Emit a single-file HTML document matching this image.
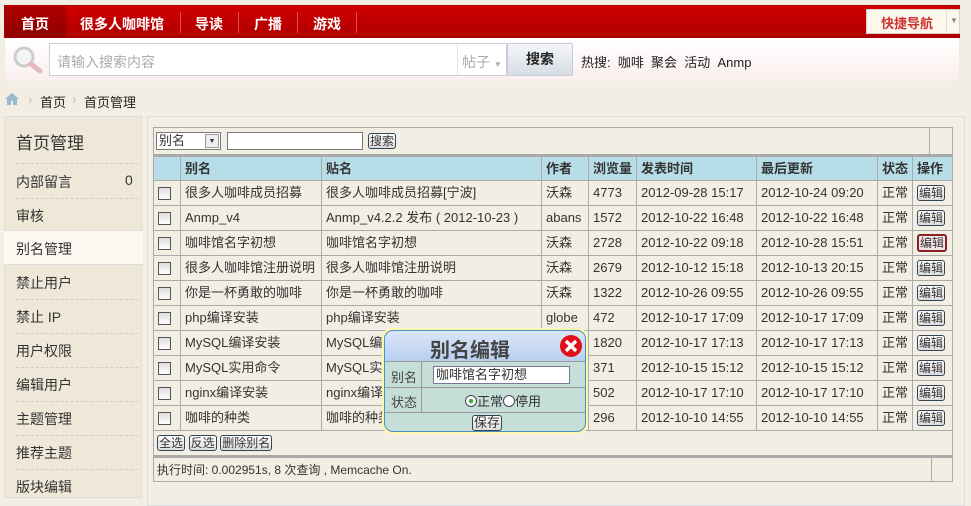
<!DOCTYPE html>
<html><head><meta charset="utf-8"><style>
*{margin:0;padding:0;box-sizing:border-box}
body{width:971px;height:498px;overflow:hidden;background:#f3eee3;font-family:"Liberation Sans","Noto Sans CJK SC",sans-serif;font-size:13px;color:#333;position:relative}
.a{position:absolute}
#nav{left:4px;top:5px;width:956px;height:33px;background:linear-gradient(#d00000,#b00000);border:1px solid #a00}
#nav span{position:absolute;top:8px;color:#fff;font-weight:bold;font-size:14px}
.sep{position:absolute;top:6px;width:1px;height:21px;background:#e05050}
#sb{left:4px;top:38px;width:956px;height:44px;background:linear-gradient(#fff,#fbeeee);border:1px solid #eed;border-top:none}
table{border-collapse:collapse}
#t td{border:1px solid #aaa;height:25px;padding:0 4px;font-size:13px;color:#333;white-space:nowrap;line-height:14px}
#t tr.h td{background:#b7dde8;font-weight:bold}
.cb{display:inline-block;width:13px;height:13px;border:1px solid #555;background:linear-gradient(#ddd,#fff);vertical-align:middle}
.btn{display:inline-block;border:1px solid #345;border-radius:3px;background:linear-gradient(#fff,#ddd);font-size:12px;padding:0 1px;line-height:14px}
.side div{position:absolute;left:11px;font-size:14px;color:#333}
.dash{position:absolute;left:10px;width:122px;border-top:1px dashed #ccc}
</style></head><body>
<div class="a" id="nav">
<div class="a" style="left:0;top:0;width:61px;height:31px;background:linear-gradient(#b00000,#900000)"></div>
<span style="left:16px">首页</span><span style="left:75px">很多人咖啡馆</span><div class="sep" style="left:175px"></div>
<span style="left:190px">导读</span><div class="sep" style="left:233px"></div>
<span style="left:249px">广播</span><div class="sep" style="left:292px"></div>
<span style="left:308px">游戏</span><div class="sep" style="left:351px"></div>
<div class="a" style="left:861px;top:3px;width:94px;height:25px;background:#fdf8ec;border:1px solid #dcc"></div>
<div class="a" style="left:876px;top:7px;color:#c33;font-weight:bold;font-size:13px">快捷导航</div>
<div class="a" style="left:941px;top:4px;width:1px;height:23px;background:#ddd"></div>
<div class="a" style="left:945px;top:10px;color:#888;font-size:8px">▼</div>
</div>
<div class="a" id="sb"></div>
<svg class="a" style="left:12px;top:45px" width="32" height="30"><circle cx="12" cy="12" r="9" fill="#f4f4f4" stroke="#ccc" stroke-width="3"/><line x1="19" y1="19" x2="28" y2="26" stroke="#e3b8c4" stroke-width="5" stroke-linecap="round"/></svg>
<div class="a" style="left:49px;top:43px;width:458px;height:33px;background:#fff;border:1px solid #ccd"></div>
<div class="a" style="left:57px;top:52px;color:#aaa;font-size:14px">请输入搜索内容</div>
<div class="a" style="left:457px;top:44px;width:1px;height:31px;background:#e4e4e4"></div>
<div class="a" style="left:462px;top:52px;color:#aaa;font-size:14px">帖子 <span style="font-size:8px">▼</span></div>
<div class="a" style="left:507px;top:43px;width:66px;height:33px;background:linear-gradient(#f4f6f8,#d6dde4);border:1px solid #c6ccd4;border-radius:2px;text-align:center;line-height:31px;font-weight:bold;font-size:14px;color:#222">搜索</div>
<div class="a" style="left:581px;top:52px;font-size:13px;color:#222">热搜: &nbsp;咖啡 &nbsp;聚会 &nbsp;活动 &nbsp;Anmp</div>
<svg class="a" style="left:5px;top:93px" width="14" height="12"><path d="M7 0L0 6h2v6h4V8h2v4h4V6h2z" fill="#9bb8cc"/></svg>
<div class="a" style="left:28px;top:92px;color:#bbb">›</div>
<div class="a" style="left:40px;top:92px;color:#222">首页</div>
<div class="a" style="left:72px;top:92px;color:#bbb">›</div>
<div class="a" style="left:84px;top:92px;color:#222">首页管理</div>
<div class="a side" style="left:4px;top:116px;width:138px;height:382px;background:#efe8d9;border:1px solid #ddd">
<div style="top:12px;font-size:17px">首页管理</div><div class="dash" style="top:46px"></div>
<div style="top:55px">内部留言</div><div style="top:55px;left:120px">0</div><div class="dash" style="top:81px"></div>
<div style="top:89px">审核</div>
<div style="top:113px;left:-1px;width:139px;height:35px;background:#fbf8f2;border-top:1px solid #ddd;border-bottom:1px solid #ddd"></div>
<div style="top:122px">别名管理</div>
<div style="top:156px">禁止用户</div><div class="dash" style="top:182px"></div>
<div style="top:190px">禁止 IP</div><div class="dash" style="top:216px"></div>
<div style="top:224px">用户权限</div><div class="dash" style="top:250px"></div>
<div style="top:258px">编辑用户</div><div class="dash" style="top:284px"></div>
<div style="top:292px">主题管理</div><div class="dash" style="top:318px"></div>
<div style="top:326px">推荐主题</div><div class="dash" style="top:352px"></div>
<div style="top:360px">版块编辑</div>
</div>
<div class="a" style="left:147px;top:116px;width:818px;height:390px;border:1px solid #ddd"></div>
<div class="a" style="left:153px;top:127px;width:800px;height:355px;border:1px solid #aaa"></div>
<div class="a" style="left:929px;top:127px;width:1px;height:27px;background:#aaa"></div>
<div class="a" style="left:156px;top:132px;width:65px;height:18px;background:#fff;border:1px solid #777;font-size:13px;padding-left:2px;line-height:16px">别名<span class="a" style="right:1px;top:1px;width:14px;height:14px;background:#eee;border:1px solid #999;font-size:7px;text-align:center;line-height:13px">▼</span></div>
<div class="a" style="left:227px;top:132px;width:136px;height:18px;background:#fff;border:1px solid #777"></div>
<div class="a" style="left:368px;top:133px"><span class="btn">搜索</span></div>
<table id="t" class="a" style="left:153px;top:154px;width:800px;border-top:3px solid #aaa">
<tr class="h"><td style="width:27px"></td><td style="width:141px">别名</td><td style="width:220px">贴名</td><td style="width:47px">作者</td><td style="width:48px">浏览量</td><td style="width:120px">发表时间</td><td style="width:121px">最后更新</td><td style="width:35px">状态</td><td>操作</td></tr>
<tr><td><i class="cb"></i></td><td>很多人咖啡成员招募</td><td>很多人咖啡成员招募[宁波]</td><td>沃森</td><td>4773</td><td>2012-09-28 15:17</td><td>2012-10-24 09:20</td><td>正常</td><td><span class="btn">编辑</span></td></tr>
<tr><td><i class="cb"></i></td><td>Anmp_v4</td><td>Anmp_v4.2.2 发布 ( 2012-10-23 )</td><td>abans</td><td>1572</td><td>2012-10-22 16:48</td><td>2012-10-22 16:48</td><td>正常</td><td><span class="btn">编辑</span></td></tr>
<tr><td><i class="cb"></i></td><td>咖啡馆名字初想</td><td>咖啡馆名字初想</td><td>沃森</td><td>2728</td><td>2012-10-22 09:18</td><td>2012-10-28 15:51</td><td>正常</td><td><span class="btn" style="border:2px solid #822;background:#f6e6ea">编辑</span></td></tr>
<tr><td><i class="cb"></i></td><td>很多人咖啡馆注册说明</td><td>很多人咖啡馆注册说明</td><td>沃森</td><td>2679</td><td>2012-10-12 15:18</td><td>2012-10-13 20:15</td><td>正常</td><td><span class="btn">编辑</span></td></tr>
<tr><td><i class="cb"></i></td><td>你是一杯勇敢的咖啡</td><td>你是一杯勇敢的咖啡</td><td>沃森</td><td>1322</td><td>2012-10-26 09:55</td><td>2012-10-26 09:55</td><td>正常</td><td><span class="btn">编辑</span></td></tr>
<tr><td><i class="cb"></i></td><td>php编译安装</td><td>php编译安装</td><td>globe</td><td>472</td><td>2012-10-17 17:09</td><td>2012-10-17 17:09</td><td>正常</td><td><span class="btn">编辑</span></td></tr>
<tr><td><i class="cb"></i></td><td>MySQL编译安装</td><td>MySQL编译安装</td><td>沃森</td><td>1820</td><td>2012-10-17 17:13</td><td>2012-10-17 17:13</td><td>正常</td><td><span class="btn">编辑</span></td></tr>
<tr><td><i class="cb"></i></td><td>MySQL实用命令</td><td>MySQL实用命令</td><td>沃森</td><td>371</td><td>2012-10-15 15:12</td><td>2012-10-15 15:12</td><td>正常</td><td><span class="btn">编辑</span></td></tr>
<tr><td><i class="cb"></i></td><td>nginx编译安装</td><td>nginx编译安装</td><td>沃森</td><td>502</td><td>2012-10-17 17:10</td><td>2012-10-17 17:10</td><td>正常</td><td><span class="btn">编辑</span></td></tr>
<tr><td><i class="cb"></i></td><td>咖啡的种类</td><td>咖啡的种类</td><td>沃森</td><td>296</td><td>2012-10-10 14:55</td><td>2012-10-10 14:55</td><td>正常</td><td><span class="btn">编辑</span></td></tr>
</table>
<div class="a" style="left:157px;top:435px"><span class="btn">全选</span> <span class="btn">反选</span> <span class="btn">删除别名</span></div>
<div class="a" style="left:153px;top:455px;width:800px;height:3px;background:#aaa"></div>
<div class="a" style="left:931px;top:456px;width:1px;height:25px;background:#aaa"></div>
<div class="a" style="left:157px;top:461px;font-size:12px">执行时间: 0.002951s, 8 次查询 , Memcache On.</div>
<div class="a" style="left:382px;top:328px;width:206px;height:106px;border-radius:10px;background:#fff6b0"></div>
<div class="a" style="left:384px;top:330px;width:202px;height:102px;border:1px solid #4a90c0;border-radius:9px;background:#c6ded8;overflow:hidden">
<div class="a" style="left:0;top:0;width:200px;height:31px;background:linear-gradient(#dbe6f8,#b8cff0);border-bottom:1px solid #999"></div>
<div class="a" style="left:45px;top:3px;font-size:20px;font-weight:bold;color:#444">别名编辑</div>
<svg class="a" style="left:174px;top:3px" width="24" height="24"><circle cx="12" cy="12" r="11" fill="#e0101a"/><path d="M7 7L17 17M17 7L7 17" stroke="#fff" stroke-width="3.5"/></svg>
<div class="a" style="left:0;top:56px;width:200px;height:1px;background:#999"></div>
<div class="a" style="left:0;top:81px;width:200px;height:1px;background:#999"></div>
<div class="a" style="left:36px;top:31px;width:1px;height:50px;background:#999"></div>
<div class="a" style="left:6px;top:36px;color:#444">别名</div>
<div class="a" style="left:6px;top:61px;color:#444">状态</div>
<div class="a" style="left:48px;top:35px;width:137px;height:18px;background:#fff;border:1px solid #779;font-size:13px;padding-left:2px;line-height:16px">咖啡馆名字初想</div>
<div class="a" style="left:80px;top:60px;font-size:13px;color:#333"><i style="display:inline-block;width:12px;height:12px;border-radius:50%;border:1px solid #445;background:radial-gradient(#3a3 25%,#fff 35%);vertical-align:-1px"></i>正常<i style="display:inline-block;width:12px;height:12px;border-radius:50%;border:1px solid #445;background:#fff;vertical-align:-1px"></i>停用</div>
<div class="a" style="left:87px;top:84px"><span class="btn" style="font-size:13px">保存</span></div>
</div>
</body></html>
